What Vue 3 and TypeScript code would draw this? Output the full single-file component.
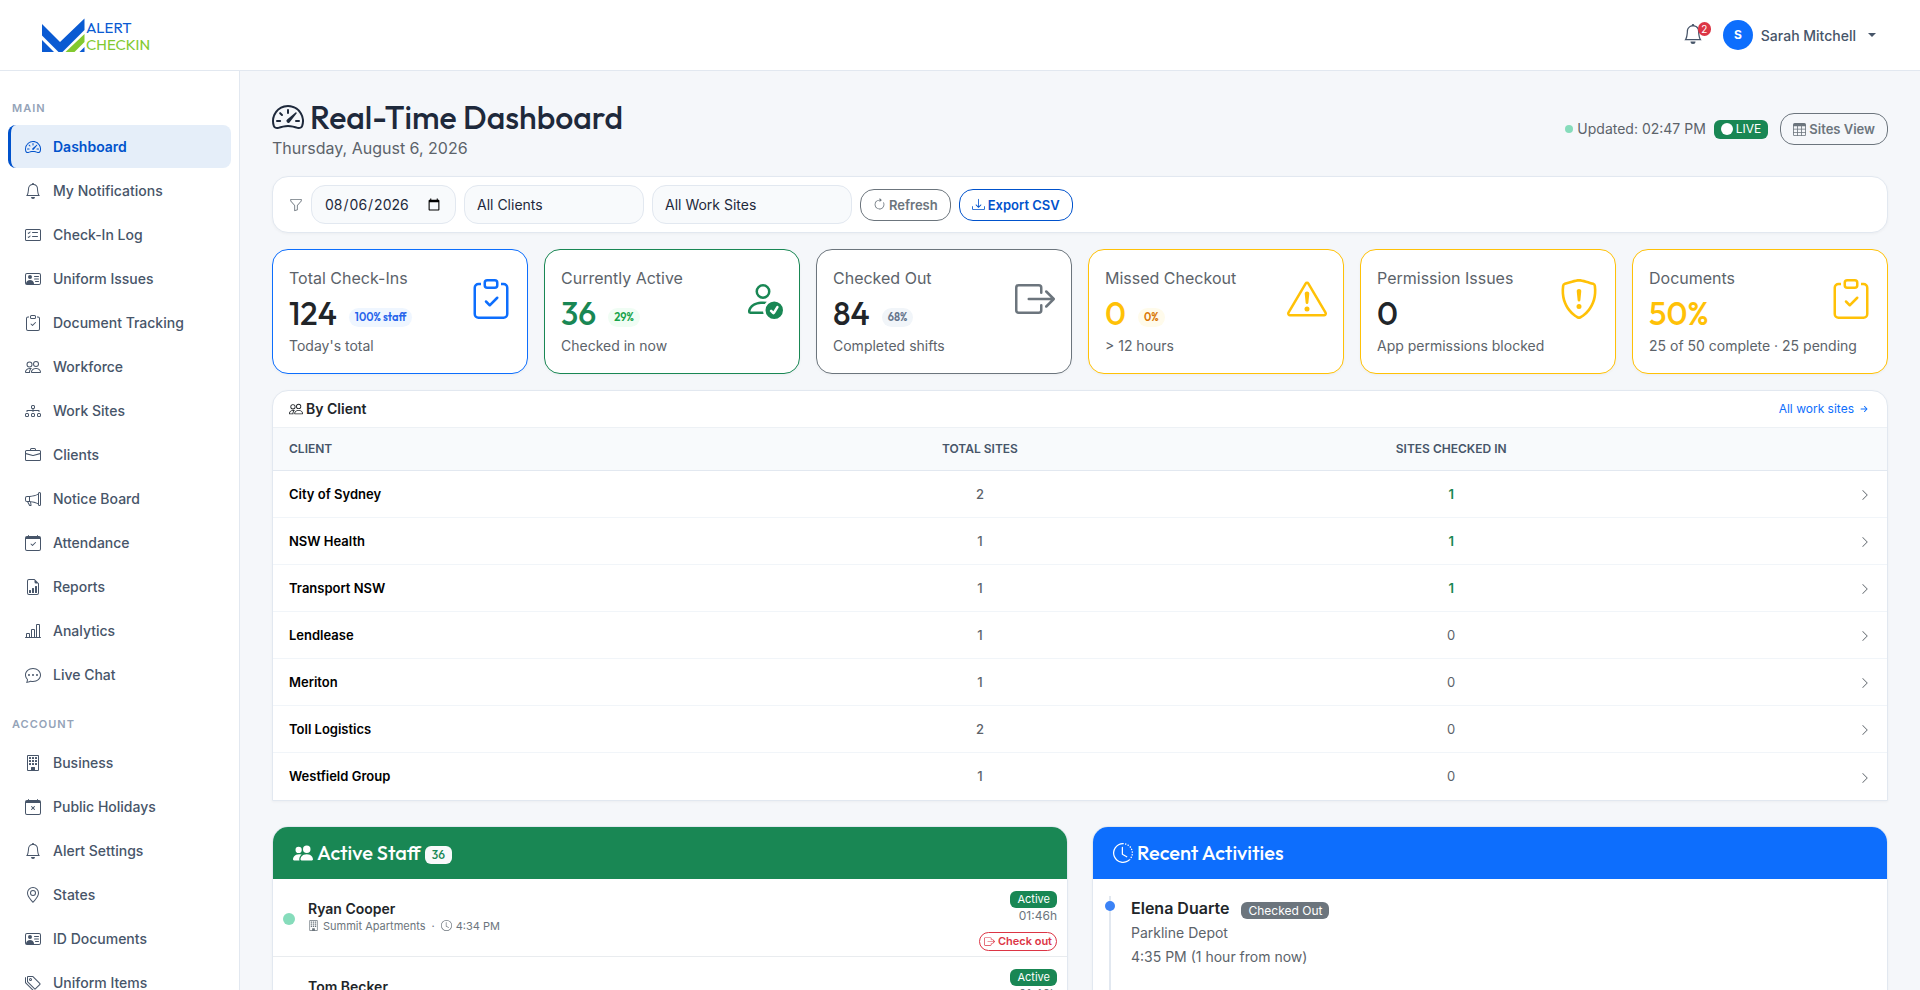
<script setup lang="ts">
import { h, ref } from 'vue'

interface NavItem { icon: string; label: string }
interface Stat {
  label: string
  value: string
  note: string
  icon: string
  tone: string
  valueTone: string
  pill?: string
  pillTone?: string
}
interface ClientRow { name: string; total: number; checkedIn: number }
interface StaffRow { name: string; site: string; time: string; elapsed: string }

const clipFrame = 'M4 1.5H3a2 2 0 0 0-2 2V14a2 2 0 0 0 2 2h10a2 2 0 0 0 2-2V3.5a2 2 0 0 0-2-2h-1v1h1a1 1 0 0 1 1 1V14a1 1 0 0 1-1 1H3a1 1 0 0 1-1-1V3.5a1 1 0 0 1 1-1h1z'
const clipTop = 'M9.5 1a.5.5 0 0 1 .5.5v1a.5.5 0 0 1-.5.5h-3a.5.5 0 0 1-.5-.5v-1a.5.5 0 0 1 .5-.5zm-3-1A1.5 1.5 0 0 0 5 1.5v1A1.5 1.5 0 0 0 6.5 4h3A1.5 1.5 0 0 0 11 2.5v-1A1.5 1.5 0 0 0 9.5 0z'
const tick = 'M10.854 7.146a.5.5 0 0 1 0 .708l-3 3a.5.5 0 0 1-.708 0l-1.5-1.5a.5.5 0 1 1 .708-.708L7.5 9.793l2.646-2.647a.5.5 0 0 1 .708 0'
const calFrame = 'M3.5 0a.5.5 0 0 1 .5.5V1h8V.5a.5.5 0 0 1 1 0V1h1a2 2 0 0 1 2 2v11a2 2 0 0 1-2 2H2a2 2 0 0 1-2-2V3a2 2 0 0 1 2-2h1V.5a.5.5 0 0 1 .5-.5M1 4v10a1 1 0 0 0 1 1h12a1 1 0 0 0 1-1V4z'
const pane = (x: number, y: number): string => `M${x} ${y + 0.5}a.5.5 0 0 1 .5-.5h1a.5.5 0 0 1 .5.5v1a.5.5 0 0 1-.5.5h-1a.5.5 0 0 1-.5-.5z`

const icons: Record<string, string[]> = {
  speedometer: [
    'M8 4a.5.5 0 0 1 .5.5V6a.5.5 0 0 1-1 0V4.5A.5.5 0 0 1 8 4M3.732 5.732a.5.5 0 0 1 .707 0l.915.914a.5.5 0 1 1-.708.708l-.914-.915a.5.5 0 0 1 0-.707M2 10a.5.5 0 0 1 .5-.5h1.586a.5.5 0 0 1 0 1H2.5A.5.5 0 0 1 2 10m9.5 0a.5.5 0 0 1 .5-.5h1.5a.5.5 0 0 1 0 1H12a.5.5 0 0 1-.5-.5m.754-4.246a.39.39 0 0 0-.527-.02L7.547 9.31a.91.91 0 1 0 1.302 1.258l3.434-4.297a.39.39 0 0 0-.029-.518z',
    'M0 10a8 8 0 1 1 15.547 2.661c-.442 1.253-1.845 1.602-2.932 1.25C11.309 13.488 9.475 13 8 13c-1.474 0-3.31.488-4.615.911-1.087.352-2.49.003-2.932-1.25A8 8 0 0 1 0 10m8-7a7 7 0 0 0-6.603 9.329c.203.575.923.876 1.68.63C4.397 12.533 6.358 12 8 12s3.604.532 4.923.96c.757.245 1.477-.056 1.68-.631A7 7 0 0 0 8 3',
  ],
  bell: ['M8 16a2 2 0 0 0 2-2H6a2 2 0 0 0 2 2M8 1.918l-.797.161A4 4 0 0 0 4 6c0 .628-.134 2.197-.459 3.742-.16.767-.376 1.566-.663 2.258h10.244c-.287-.692-.502-1.49-.663-2.258C12.134 8.197 12 6.628 12 6a4 4 0 0 0-3.203-3.92zM14.22 12c.223.447.481.801.78 1H1c.299-.199.557-.553.78-1C2.68 10.2 3 6.88 3 6c0-2.42 1.72-4.44 4.005-4.901a1 1 0 1 1 1.99 0A5 5 0 0 1 13 6c0 .88.32 4.2 1.22 6'],
  checklist: [
    'M14.5 3a.5.5 0 0 1 .5.5v9a.5.5 0 0 1-.5.5h-13a.5.5 0 0 1-.5-.5v-9a.5.5 0 0 1 .5-.5zm-13-1A1.5 1.5 0 0 0 0 3.5v9A1.5 1.5 0 0 0 1.5 14h13a1.5 1.5 0 0 0 1.5-1.5v-9A1.5 1.5 0 0 0 14.5 2z',
    'M7 5.5a.5.5 0 0 1 .5-.5h5a.5.5 0 0 1 0 1h-5a.5.5 0 0 1-.5-.5m-1.496-.854a.5.5 0 0 1 0 .708l-1.5 1.5a.5.5 0 0 1-.708 0l-.5-.5a.5.5 0 1 1 .708-.708l.146.147 1.146-1.147a.5.5 0 0 1 .708 0M7 9.5a.5.5 0 0 1 .5-.5h5a.5.5 0 0 1 0 1h-5a.5.5 0 0 1-.5-.5m-1.496-.854a.5.5 0 0 1 0 .708l-1.5 1.5a.5.5 0 0 1-.708 0l-.5-.5a.5.5 0 0 1 .708-.708l.146.147 1.146-1.147a.5.5 0 0 1 .708 0',
  ],
  vcard: [
    'M5 8a2 2 0 1 0 0-4 2 2 0 0 0 0 4m4-2.5a.5.5 0 0 1 .5-.5h4a.5.5 0 0 1 0 1h-4a.5.5 0 0 1-.5-.5M9 8a.5.5 0 0 1 .5-.5h4a.5.5 0 0 1 0 1h-4A.5.5 0 0 1 9 8m1 2.5a.5.5 0 0 1 .5-.5h3a.5.5 0 0 1 0 1h-3a.5.5 0 0 1-.5-.5',
    'M2 2a2 2 0 0 0-2 2v8a2 2 0 0 0 2 2h12a2 2 0 0 0 2-2V4a2 2 0 0 0-2-2zM1 4a1 1 0 0 1 1-1h12a1 1 0 0 1 1 1v8a1 1 0 0 1-1 1H8.96q.04-.245.04-.5C9 10.567 7.21 9 5 9c-2.086 0-3.8 1.398-3.984 3.181A1 1 0 0 1 1 12z',
  ],
  clipboard: [tick, clipFrame, clipTop],
  people: ['M15 14s1 0 1-1-1-4-5-4-5 3-5 4 1 1 1 1zm-7.978-1L7 12.996c.001-.264.167-1.03.76-1.72C8.312 10.629 9.282 10 11 10c1.717 0 2.687.63 3.24 1.276.593.69.758 1.457.76 1.72l-.008.002-.014.002zM11 7a2 2 0 1 0 0-4 2 2 0 0 0 0 4m3-2a3 3 0 1 1-6 0 3 3 0 0 1 6 0M6.936 9.28a6 6 0 0 0-1.23-.247A7 7 0 0 0 5 9c-4 0-5 3-5 4q0 1 1 1h4.216A2.24 2.24 0 0 1 5 13c0-1.01.377-2.042 1.09-2.904.243-.294.526-.569.846-.816M4.92 10A5.5 5.5 0 0 0 4 13H1c0-.26.164-1.03.76-1.724.545-.636 1.492-1.256 3.16-1.275ZM1.5 5.5a3 3 0 1 1 6 0 3 3 0 0 1-6 0m3-2a2 2 0 1 0 0 4 2 2 0 0 0 0-4'],
  diagram: ['M6 3.5A1.5 1.5 0 0 1 7.5 2h1A1.5 1.5 0 0 1 10 3.5v1A1.5 1.5 0 0 1 8.5 6v1H14a.5.5 0 0 1 .5.5v1a.5.5 0 0 1-1 0V8h-5v.5a.5.5 0 0 1-1 0V8h-5v.5a.5.5 0 0 1-1 0v-1A.5.5 0 0 1 2 7h5.5V6A1.5 1.5 0 0 1 6 4.5zM8.5 5a.5.5 0 0 0 .5-.5v-1a.5.5 0 0 0-.5-.5h-1a.5.5 0 0 0-.5.5v1a.5.5 0 0 0 .5.5zM0 11.5A1.5 1.5 0 0 1 1.5 10h1A1.5 1.5 0 0 1 4 11.5v1A1.5 1.5 0 0 1 2.5 14h-1A1.5 1.5 0 0 1 0 12.5zm1.5-.5a.5.5 0 0 0-.5.5v1a.5.5 0 0 0 .5.5h1a.5.5 0 0 0 .5-.5v-1a.5.5 0 0 0-.5-.5zm4.5.5A1.5 1.5 0 0 1 7.5 10h1a1.5 1.5 0 0 1 1.5 1.5v1A1.5 1.5 0 0 1 8.5 14h-1A1.5 1.5 0 0 1 6 12.5zm1.5-.5a.5.5 0 0 0-.5.5v1a.5.5 0 0 0 .5.5h1a.5.5 0 0 0 .5-.5v-1a.5.5 0 0 0-.5-.5zm4.5.5a1.5 1.5 0 0 1 1.5-1.5h1a1.5 1.5 0 0 1 1.5 1.5v1a1.5 1.5 0 0 1-1.5 1.5h-1a1.5 1.5 0 0 1-1.5-1.5zm1.5-.5a.5.5 0 0 0-.5.5v1a.5.5 0 0 0 .5.5h1a.5.5 0 0 0 .5-.5v-1a.5.5 0 0 0-.5-.5z'],
  briefcase: ['M6.5 1A1.5 1.5 0 0 0 5 2.5V3H1.5A1.5 1.5 0 0 0 0 4.5v8A1.5 1.5 0 0 0 1.5 14h13a1.5 1.5 0 0 0 1.5-1.5v-8A1.5 1.5 0 0 0 14.5 3H11v-.5A1.5 1.5 0 0 0 9.5 1zm0 1h3a.5.5 0 0 1 .5.5V3H6v-.5a.5.5 0 0 1 .5-.5m1.886 6.914L15 7.151V12.5a.5.5 0 0 1-.5.5h-13a.5.5 0 0 1-.5-.5V7.15l6.614 1.764a1.5 1.5 0 0 0 .772 0M1.5 4h13a.5.5 0 0 1 .5.5v1.616L8.129 7.948a.5.5 0 0 1-.258 0L1 6.116V4.5a.5.5 0 0 1 .5-.5'],
  megaphone: ['M13 2.5a1.5 1.5 0 0 1 3 0v11a1.5 1.5 0 0 1-3 0v-.214c-2.162-1.241-4.49-1.843-6.912-2.083l.405 2.712A1 1 0 0 1 5.51 15.1h-.548a1 1 0 0 1-.916-.599l-1.85-3.49-.202-.003A2.014 2.014 0 0 1 0 9V7a2.02 2.02 0 0 1 1.992-2.013 75 75 0 0 0 2.483-.075c3.043-.154 6.148-.849 8.525-2.199zm1 0v11a.5.5 0 0 0 1 0v-11a.5.5 0 0 0-1 0m-1 1.35c-2.344 1.205-5.209 1.842-8 2.033v4.233q.27.015.537.036c2.568.189 5.093.744 7.463 1.993zm-9 6.215v-4.13a95 95 0 0 1-1.992.052A1.02 1.02 0 0 0 1 7v2c0 .55.448 1.002 1.006 1.009A61 61 0 0 1 4 10.065m-.657.975 1.609 3.037.01.024h.548l-.002-.014-.443-2.966a68 68 0 0 0-1.722-.082z'],
  calendarCheck: [tick, calFrame],
  calendarX: [
    'M6.146 7.146a.5.5 0 0 1 .708 0L8 8.293l1.146-1.147a.5.5 0 1 1 .708.708L8.707 9l1.147 1.146a.5.5 0 0 1-.708.708L8 9.707l-1.146 1.147a.5.5 0 0 1-.708-.708L7.293 9 6.146 7.854a.5.5 0 0 1 0-.708',
    calFrame,
  ],
  fileGraph: [
    'M10 13.5a.5.5 0 0 0 .5.5h1a.5.5 0 0 0 .5-.5v-6a.5.5 0 0 0-.5-.5h-1a.5.5 0 0 0-.5.5zm-2.5.5a.5.5 0 0 1-.5-.5v-4a.5.5 0 0 1 .5-.5h1a.5.5 0 0 1 .5.5v4a.5.5 0 0 1-.5.5zm-3 0a.5.5 0 0 1-.5-.5v-2a.5.5 0 0 1 .5-.5h1a.5.5 0 0 1 .5.5v2a.5.5 0 0 1-.5.5z',
    'M14 14V4.5L9.5 0H4a2 2 0 0 0-2 2v12a2 2 0 0 0 2 2h8a2 2 0 0 0 2-2M9.5 3A1.5 1.5 0 0 0 11 4.5h2V14a1 1 0 0 1-1 1H4a1 1 0 0 1-1-1V2a1 1 0 0 1 1-1h5.5z',
  ],
  barChart: ['M11 2a1 1 0 0 1 1-1h2a1 1 0 0 1 1 1v12h.5a.5.5 0 0 1 0 1H.5a.5.5 0 0 1 0-1H1v-3a1 1 0 0 1 1-1h2a1 1 0 0 1 1 1v3h1V7a1 1 0 0 1 1-1h2a1 1 0 0 1 1 1v7h1zm1 12h2V2h-2zm-3 0V7H7v7zm-5 0v-3H2v3z'],
  chat: [
    'M5 8a1 1 0 1 1-2 0 1 1 0 0 1 2 0m4 0a1 1 0 1 1-2 0 1 1 0 0 1 2 0m3 1a1 1 0 1 0 0-2 1 1 0 0 0 0 2',
    'm2.165 15.803.02-.004c1.83-.363 2.948-.842 3.468-1.105A9 9 0 0 0 8 15c4.418 0 8-3.134 8-7s-3.582-7-8-7-8 3.134-8 7c0 1.76.743 3.37 1.97 4.6a10.4 10.4 0 0 1-.524 2.318l-.003.011a11 11 0 0 1-.244.637c-.079.186.074.394.273.362a22 22 0 0 0 .693-.125m.8-3.108a1 1 0 0 0-.287-.801C1.618 10.83 1 9.468 1 8c0-3.192 3.004-6 7-6s7 2.808 7 6-3.004 6-7 6a8 8 0 0 1-2.088-.272 1 1 0 0 0-.711.074c-.387.196-1.24.57-2.634.893a11 11 0 0 0 .398-2',
  ],
  building: [
    [4, 7, 10].flatMap((x) => [2, 5, 8].map((y) => pane(x, y))).join(''),
    'M2 1a1 1 0 0 1 1-1h10a1 1 0 0 1 1 1v14a1 1 0 0 1-1 1H3a1 1 0 0 1-1-1zm11 0H3v14h3v-2.5a.5.5 0 0 1 .5-.5h3a.5.5 0 0 1 .5.5V15h3z',
  ],
  pin: [
    'M12.166 8.94c-.524 1.062-1.234 2.12-1.96 3.07A32 32 0 0 1 8 14.58a32 32 0 0 1-2.206-2.57c-.726-.95-1.436-2.008-1.96-3.07C3.304 7.867 3 6.862 3 6a5 5 0 0 1 10 0c0 .862-.305 1.867-.834 2.94M8 16s6-5.686 6-10A6 6 0 0 0 2 6c0 4.314 6 10 6 10',
    'M8 8a2 2 0 1 1 0-4 2 2 0 0 1 0 4m0 1a3 3 0 1 0 0-6 3 3 0 0 0 0 6',
  ],
  tags: [
    'M3 2v4.586l7 7L14.586 9l-7-7zM2 2a1 1 0 0 1 1-1h4.586a1 1 0 0 1 .707.293l7 7a1 1 0 0 1 0 1.414l-4.586 4.586a1 1 0 0 1-1.414 0l-7-7A1 1 0 0 1 2 6.586z',
    'M5.5 5a.5.5 0 1 1 0-1 .5.5 0 0 1 0 1m0 1a1.5 1.5 0 1 0 0-3 1.5 1.5 0 0 0 0 3M1 7.086a1 1 0 0 0 .293.707L8.75 15.25l-.043.043a1 1 0 0 1-1.414 0l-7-7A1 1 0 0 1 0 7.586V3a1 1 0 0 1 1-1z',
  ],
  funnel: ['M1.5 1.5A.5.5 0 0 1 2 1h12a.5.5 0 0 1 .5.5v2a.5.5 0 0 1-.128.334L10 8.692V13.5a.5.5 0 0 1-.342.474l-3 1A.5.5 0 0 1 6 14.5V8.692L1.628 3.834A.5.5 0 0 1 1.5 3.5zm1 .5v1.308l4.372 4.858A.5.5 0 0 1 7 8.5v5.306l2-.666V8.5a.5.5 0 0 1 .128-.334L13.5 3.308V2z'],
  refresh: [
    'M8 3a5 5 0 1 0 4.546 2.914.5.5 0 0 1 .908-.417A6 6 0 1 1 8 2z',
    'M8 4.466V.534a.25.25 0 0 1 .41-.192l2.36 1.966c.12.1.12.284 0 .384L8.41 4.658A.25.25 0 0 1 8 4.466',
  ],
  download: [
    'M.5 9.9a.5.5 0 0 1 .5.5v2.5a1 1 0 0 0 1 1h12a1 1 0 0 0 1-1v-2.5a.5.5 0 0 1 1 0v2.5a2 2 0 0 1-2 2H2a2 2 0 0 1-2-2v-2.5a.5.5 0 0 1 .5-.5',
    'M7.646 11.854a.5.5 0 0 0 .708 0l3-3a.5.5 0 0 0-.708-.708L8.5 10.293V1.5a.5.5 0 0 0-1 0v8.793L5.354 8.146a.5.5 0 1 0-.708.708z',
  ],
  personCheck: [
    'M12.5 16a3.5 3.5 0 1 0 0-7 3.5 3.5 0 0 0 0 7m1.679-4.493-1.335 2.226a.75.75 0 0 1-1.174.144l-.774-.773a.5.5 0 0 1 .708-.708l.547.548 1.17-1.951a.5.5 0 1 1 .858.514M11 5a3 3 0 1 1-6 0 3 3 0 0 1 6 0M8 7a2 2 0 1 0 0-4 2 2 0 0 0 0 4',
    'M8.256 14a4.5 4.5 0 0 1-.229-1.004H3c.001-.246.154-.986.832-1.664C4.484 10.68 5.711 10 8 10q.39 0 .74.025c.226-.341.496-.65.804-.918Q8.844 9.002 8 9c-5 0-6 3-6 4s1 1 1 1z',
  ],
  exit: [
    'M10 12.5a.5.5 0 0 1-.5.5h-8a.5.5 0 0 1-.5-.5v-9a.5.5 0 0 1 .5-.5h8a.5.5 0 0 1 .5.5v2a.5.5 0 0 0 1 0v-2A1.5 1.5 0 0 0 9.5 2h-8A1.5 1.5 0 0 0 0 3.5v9A1.5 1.5 0 0 0 1.5 14h8a1.5 1.5 0 0 0 1.5-1.5v-2a.5.5 0 0 0-1 0z',
    'M15.854 8.354a.5.5 0 0 0 0-.708l-3-3a.5.5 0 0 0-.708.708L14.293 7.5H5.5a.5.5 0 0 0 0 1h8.793l-2.147 2.146a.5.5 0 0 0 .708.708z',
  ],
  warning: [
    'M7.938 2.016A.13.13 0 0 1 8.002 2a.13.13 0 0 1 .063.016.15.15 0 0 1 .054.057l6.857 11.667c.036.06.035.124.002.183a.2.2 0 0 1-.054.06.1.1 0 0 1-.066.017H1.146a.1.1 0 0 1-.066-.017.2.2 0 0 1-.054-.06.18.18 0 0 1 .002-.183L7.884 2.073a.15.15 0 0 1 .054-.057m1.044-.45a1.13 1.13 0 0 0-1.96 0L.165 13.233c-.457.778.091 1.767.98 1.767h13.713c.889 0 1.438-.99.98-1.767z',
    'M7.002 12a1 1 0 1 1 2 0 1 1 0 0 1-2 0M7.1 5.995a.905.905 0 1 1 1.8 0l-.35 3.507a.552.552 0 0 1-1.1 0z',
  ],
  shield: [
    'M5.338 1.59a61 61 0 0 0-2.837.856.48.48 0 0 0-.328.39c-.554 4.157.726 7.19 2.253 9.188a10.7 10.7 0 0 0 2.287 2.233c.346.244.652.42.893.533q.18.085.293.118a1 1 0 0 0 .101.025 1 1 0 0 0 .1-.025q.114-.034.294-.118c.24-.113.547-.29.893-.533a10.7 10.7 0 0 0 2.287-2.233c1.527-1.997 2.807-5.031 2.253-9.188a.48.48 0 0 0-.328-.39c-.651-.213-1.75-.56-2.837-.855C9.552 1.29 8.531 1.067 8 1.067c-.53 0-1.552.223-2.662.524zM5.072.56C6.157.265 7.31 0 8 0s1.843.265 2.928.56c1.11.3 2.229.655 2.887.87a1.54 1.54 0 0 1 1.044 1.262c.596 4.477-.787 7.795-2.465 9.99a11.8 11.8 0 0 1-2.517 2.453 7 7 0 0 1-1.048.625c-.28.132-.581.24-.829.24s-.548-.108-.829-.24a7 7 0 0 1-1.048-.625 11.8 11.8 0 0 1-2.517-2.453C1.928 10.487.545 7.169 1.141 2.692A1.54 1.54 0 0 1 2.185 1.43 63 63 0 0 1 5.072.56',
    'M7.001 11a1 1 0 1 1 2 0 1 1 0 0 1-2 0M7.1 4.995a.905.905 0 1 1 1.8 0l-.35 3.507a.553.553 0 0 1-1.1 0z',
  ],
  chevron: ['M4.646 1.646a.5.5 0 0 1 .708 0l6 6a.5.5 0 0 1 0 .708l-6 6a.5.5 0 0 1-.708-.708L10.293 8 4.646 2.354a.5.5 0 0 1 0-.708'],
  arrowShort: ['M4 8a.5.5 0 0 1 .5-.5h5.793L8.146 5.354a.5.5 0 1 1 .708-.708l3 3a.5.5 0 0 1 0 .708l-3 3a.5.5 0 0 1-.708-.708L10.293 8.5H4.5A.5.5 0 0 1 4 8'],
  peopleFill: ['M7 14s-1 0-1-1 1-4 5-4 5 3 5 4-1 1-1 1zm4-6a3 3 0 1 0 0-6 3 3 0 0 0 0 6m-5.784 6A2.24 2.24 0 0 1 5 13c0-1.355.68-2.75 1.936-3.72A6.3 6.3 0 0 0 5 9c-4 0-5 3-5 4s1 1 1 1zM4.5 8a2.5 2.5 0 1 0 0-5 2.5 2.5 0 0 0 0 5'],
  history: [
    'M8.515 1.019A7 7 0 0 0 8 1V0a8 8 0 0 1 .589.022zm2.004.45a7 7 0 0 0-.985-.299l.219-.976q.576.129 1.126.342zm1.37.71a7 7 0 0 0-.439-.27l.493-.87a8 8 0 0 1 .979.654l-.615.789a7 7 0 0 0-.418-.302zm1.834 1.79a7 7 0 0 0-.653-.796l.724-.69q.406.429.747.91zm.744 1.352a7 7 0 0 0-.214-.468l.893-.45a8 8 0 0 1 .45 1.088l-.95.313a7 7 0 0 0-.179-.483m.53 2.507a7 7 0 0 0-.1-1.025l.985-.17q.1.58.116 1.17zm-.131 1.538q.05-.254.081-.51l.993.123a8 8 0 0 1-.23 1.155l-.964-.267q.069-.247.12-.501m-.952 2.379q.276-.436.486-.908l.914.405q-.24.54-.555 1.038zm-.964 1.205q.183-.183.35-.378l.758.653a8 8 0 0 1-.401.432z',
    'M8 1a7 7 0 1 0 4.95 11.95l.707.707A8.001 8.001 0 1 1 8 0z',
    'M7.5 3a.5.5 0 0 1 .5.5v5.21l3.248 1.856a.5.5 0 0 1-.496.868l-3.5-2A.5.5 0 0 1 7 9V3.5a.5.5 0 0 1 .5-.5',
  ],
  clock: [
    'M8 3.5a.5.5 0 0 0-1 0V9a.5.5 0 0 0 .252.434l3.5 2a.5.5 0 0 0 .496-.868L8 8.71z',
    'M8 16A8 8 0 1 0 8 0a8 8 0 0 0 0 16m7-8A7 7 0 1 1 1 8a7 7 0 0 1 14 0',
  ],
  table: ['M0 2a2 2 0 0 1 2-2h12a2 2 0 0 1 2 2v12a2 2 0 0 1-2 2H2a2 2 0 0 1-2-2zm15 2h-4v3h4zm0 4h-4v3h4zm0 4h-4v3h3a1 1 0 0 0 1-1zm-5 3v-3H6v3zm-5 0v-3H1v2a1 1 0 0 0 1 1zm-4-4h4V8H1zm0-4h4V4H1zm5-3v3h4V4zm4 4H6v3h4z'],
}

const Icon = (props: { name: string }) =>
  h(
    'svg',
    { viewBox: '0 0 16 16', fill: 'currentColor', 'aria-hidden': 'true' },
    icons[props.name].map((d) => h('path', { d, 'fill-rule': 'evenodd' })),
  )
Icon.props = ['name']

const groups: { title: string; items: NavItem[] }[] = [
  {
    title: 'Main',
    items: [
      { icon: 'speedometer', label: 'Dashboard' },
      { icon: 'bell', label: 'My Notifications' },
      { icon: 'checklist', label: 'Check-In Log' },
      { icon: 'vcard', label: 'Uniform Issues' },
      { icon: 'clipboard', label: 'Document Tracking' },
      { icon: 'people', label: 'Workforce' },
      { icon: 'diagram', label: 'Work Sites' },
      { icon: 'briefcase', label: 'Clients' },
      { icon: 'megaphone', label: 'Notice Board' },
      { icon: 'calendarCheck', label: 'Attendance' },
      { icon: 'fileGraph', label: 'Reports' },
      { icon: 'barChart', label: 'Analytics' },
      { icon: 'chat', label: 'Live Chat' },
    ],
  },
  {
    title: 'Account',
    items: [
      { icon: 'building', label: 'Business' },
      { icon: 'calendarX', label: 'Public Holidays' },
      { icon: 'bell', label: 'Alert Settings' },
      { icon: 'pin', label: 'States' },
      { icon: 'vcard', label: 'ID Documents' },
      { icon: 'tags', label: 'Uniform Items' },
    ],
  },
]

const stats: Stat[] = [
  { label: 'Total Check-Ins', value: '124', note: "Today's total", icon: 'clipboard', tone: 'blue', valueTone: 'ink', pill: '100% staff', pillTone: 'pill-blue' },
  { label: 'Currently Active', value: '36', note: 'Checked in now', icon: 'personCheck', tone: 'green', valueTone: 'green', pill: '29%', pillTone: 'pill-green' },
  { label: 'Checked Out', value: '84', note: 'Completed shifts', icon: 'exit', tone: 'grey', valueTone: 'ink', pill: '68%', pillTone: 'pill-grey' },
  { label: 'Missed Checkout', value: '0', note: '> 12 hours', icon: 'warning', tone: 'amber', valueTone: 'amber', pill: '0%', pillTone: 'pill-amber' },
  { label: 'Permission Issues', value: '0', note: 'App permissions blocked', icon: 'shield', tone: 'amber', valueTone: 'ink' },
  { label: 'Documents', value: '50%', note: '25 of 50 complete · 25 pending', icon: 'clipboard', tone: 'amber', valueTone: 'amber' },
]

const clients: ClientRow[] = [
  { name: 'City of Sydney', total: 2, checkedIn: 1 },
  { name: 'NSW Health', total: 1, checkedIn: 1 },
  { name: 'Transport NSW', total: 1, checkedIn: 1 },
  { name: 'Lendlease', total: 1, checkedIn: 0 },
  { name: 'Meriton', total: 1, checkedIn: 0 },
  { name: 'Toll Logistics', total: 2, checkedIn: 0 },
  { name: 'Westfield Group', total: 1, checkedIn: 0 },
]

const staff: StaffRow[] = [
  { name: 'Ryan Cooper', site: 'Summit Apartments', time: '4:34 PM', elapsed: '01:46h' },
  { name: 'Tom Becker', site: 'Summit Apartments', time: '4:34 PM', elapsed: '01:46h' },
]

const date = ref('2026-08-06')
const client = ref('All Clients')
const site = ref('All Work Sites')
</script>

<template>
  <div class="app">
    <header class="topbar">
      <a href="#" class="logo" aria-label="Alert Checkin">
        <svg viewBox="0 0 120 42" width="120" height="42">
          <path d="M0 10 L18 28 L42.500 4.500 V16 L20.500 38 H16.500 L0 21.500Z" fill="#0a5ad2" />
          <path d="M0 26 L12 38 H0Z" fill="#0a5ad2" />
          <path d="M42.500 20 V28 L32.500 38 H23.500Z" fill="#82c92f" />
          <path d="M42.500 33 V38 H37.500Z" fill="#0a5ad2" />
          <text x="44" y="19" class="logo-text" fill="#0a5ad2">ALERT</text>
          <text x="44" y="36" class="logo-text" fill="#82c92f">CHECKIN</text>
        </svg>
      </a>
      <div class="account">
        <button type="button" class="bell" aria-label="Notifications">
          <Icon name="bell" class="i20" />
          <span class="count">2</span>
        </button>
        <button type="button" class="user">
          <span class="avatar">S</span>
          <span>Sarah Mitchell</span>
          <span class="caret"></span>
        </button>
      </div>
    </header>

    <div class="body">
      <nav class="sidebar">
        <section v-for="g in groups" :key="g.title" class="group">
          <h2>{{ g.title }}</h2>
          <a
            v-for="item in g.items"
            :key="item.label"
            href="#"
            class="nav-item"
            :class="{ active: item.label === 'Dashboard' }"
          >
            <Icon :name="item.icon" class="i16" />
            <span>{{ item.label }}</span>
          </a>
        </section>
      </nav>

      <main class="main">
        <div class="page-head">
          <div>
            <h1><Icon name="speedometer" class="i32" />Real-Time Dashboard</h1>
            <p class="today">Thursday, August 6, 2026</p>
          </div>
          <div class="status">
            <span class="updated"><i class="dot"></i>Updated: 02:47 PM</span>
            <span class="live"><i></i>LIVE</span>
            <button type="button" class="btn grey"><Icon name="table" class="i13" />Sites View</button>
          </div>
        </div>

        <form class="filters" @submit.prevent>
          <Icon name="funnel" class="i14 muted" />
          <input v-model="date" type="date" class="field date" aria-label="Date" />
          <select v-model="client" class="field client" aria-label="Client">
            <option>All Clients</option>
          </select>
          <select v-model="site" class="field site" aria-label="Work site">
            <option>All Work Sites</option>
          </select>
          <button type="submit" class="btn grey"><Icon name="refresh" class="i13" />Refresh</button>
          <button type="button" class="btn primary"><Icon name="download" class="i13" />Export CSV</button>
        </form>

        <div class="stats">
          <article v-for="s in stats" :key="s.label" class="stat" :class="'edge-' + s.tone">
            <p class="stat-label">{{ s.label }}</p>
            <p class="stat-value">
              <strong :class="s.valueTone">{{ s.value }}</strong>
              <span v-if="s.pill" class="pill" :class="s.pillTone">{{ s.pill }}</span>
            </p>
            <p class="stat-note">{{ s.note }}</p>
            <Icon :name="s.icon" class="stat-icon" :class="s.tone" />
          </article>
        </div>

        <section class="card clients">
          <div class="clients-head">
            <h2><Icon name="people" class="i14" />By Client</h2>
            <a href="#">All work sites<Icon name="arrowShort" class="i14" /></a>
          </div>
          <table>
            <colgroup>
              <col class="c-name" />
              <col class="c-total" />
              <col class="c-in" />
              <col />
            </colgroup>
            <thead>
              <tr>
                <th scope="col" class="left">Client</th>
                <th scope="col">Total Sites</th>
                <th scope="col">Sites Checked In</th>
                <th aria-label="Open"></th>
              </tr>
            </thead>
            <tbody>
              <tr v-for="c in clients" :key="c.name">
                <td class="left name">{{ c.name }}</td>
                <td class="sum">{{ c.total }}</td>
                <td :class="{ some: c.checkedIn > 0 }">{{ c.checkedIn }}</td>
                <td class="right"><Icon name="chevron" class="i12" /></td>
              </tr>
            </tbody>
          </table>
        </section>

        <div class="panels">
          <section class="card panel">
            <h2 class="panel-head bg-green">
              <Icon name="peopleFill" class="i20" />Active Staff<span class="total">36</span>
            </h2>
            <div v-for="s in staff" :key="s.name" class="staff">
              <i class="presence"></i>
              <div class="who">
                <h3>{{ s.name }}</h3>
                <p>
                  <Icon name="building" class="i11" /><span>{{ s.site }}</span>
                  <span class="sep">·</span>
                  <Icon name="clock" class="i11" /><span>{{ s.time }}</span>
                </p>
              </div>
              <div class="shift">
                <span class="tag small bg-green">Active</span>
                <span class="elapsed">{{ s.elapsed }}</span>
                <button type="button" class="checkout"><Icon name="exit" class="i11" />Check out</button>
              </div>
            </div>
          </section>

          <section class="card panel">
            <h2 class="panel-head bg-blue"><Icon name="history" class="i20" />Recent Activities</h2>
            <ol class="timeline">
              <li>
                <div class="event">
                  <h3>Elena Duarte</h3>
                  <span class="tag bg-grey">Checked Out</span>
                </div>
                <p>Parkline Depot</p>
                <p>4:35 PM (1 hour from now)</p>
              </li>
            </ol>
          </section>
        </div>
      </main>
    </div>
  </div>
</template>

<style>
body {
  margin: 0;
  background: #f5f7fa;
}
</style>

<style scoped>
.app {
  display: flex;
  flex-direction: column;
  height: 100vh;
  overflow: hidden;
  background: #f5f7fa;
  color: #212529;
  font: 400 16px/24px Inter, "Liberation Sans", sans-serif;
}
.app * {
  box-sizing: border-box;
}
h1, h2, h3, p, ol {
  margin: 0;
  padding: 0;
}
a {
  text-decoration: none;
}
button {
  font-family: inherit;
  cursor: pointer;
}
svg {
  flex: none;
}
.i11 { width: 11px; height: 11px; }
.i12 { width: 12px; height: 12px; }
.i13 { width: 13px; height: 13px; }
.i14 { width: 14px; height: 14px; }
.i16 { width: 16px; height: 16px; }
.i20 { width: 20px; height: 20px; }
.i32 { width: 32px; height: 32px; }
.muted { color: #6c757d; }

.topbar {
  display: flex;
  flex: none;
  align-items: center;
  justify-content: space-between;
  height: 71px;
  padding: 0 44px 0 42px;
  border-bottom: 1px solid #e2e8f0;
  background: #fff;
}
.logo {
  display: flex;
}
.logo-text {
  font: 400 15px Outfit, Lato, sans-serif;
}
.account, .user {
  display: flex;
  align-items: center;
}
.account {
  gap: 12px;
}
.bell {
  position: relative;
  display: flex;
  width: 28px;
  padding: 0 0 2px;
  border: 0;
  background: none;
  color: #475569;
}
.count {
  position: absolute;
  top: -2px;
  right: 0;
  width: 13px;
  height: 14px;
  border-radius: 7px;
  background: #dc3545;
  color: #fff;
  font-size: 10px;
  line-height: 14px;
}
.user {
  gap: 8px;
  padding: 0;
  border: 0;
  background: none;
  color: #475569;
  font-size: 14px;
  font-weight: 500;
}
.avatar {
  width: 30px;
  height: 30px;
  border-radius: 50%;
  background: #0d6efd;
  color: #fff;
  font-size: 12px;
  font-weight: 700;
  line-height: 30px;
}
.caret {
  margin-left: 4px;
  border: 4px solid transparent;
  border-top-color: currentColor;
  border-bottom: 0;
}

.body {
  display: flex;
  flex: 1;
  min-height: 0;
}
.sidebar {
  flex: none;
  width: 240px;
  padding: 23px 8px 0;
  overflow-y: auto;
  scrollbar-width: none;
  border-right: 1px solid #e2e8f0;
  background: #fff;
}
.group {
  display: flex;
  flex-direction: column;
  gap: 1px;
  margin-bottom: 14px;
}
.group h2 {
  padding: 4px 4px 6px;
  color: #94a3b8;
  font-size: 11px;
  font-weight: 600;
  line-height: 20px;
  letter-spacing: 1px;
  text-transform: uppercase;
}
.nav-item {
  display: flex;
  align-items: center;
  gap: 12px;
  height: 43px;
  padding: 0 14px;
  border-left: 3px solid transparent;
  border-radius: 8px;
  color: #475569;
  font-size: 14px;
  font-weight: 500;
}
.nav-item.active {
  border-left-color: #0052cc;
  background: #e5eef9;
  color: #0052cc;
  font-weight: 600;
}

.main {
  flex: 1;
  min-width: 0;
  padding: 27px 32px;
  overflow-y: auto;
  scrollbar-width: none;
}
.page-head {
  display: flex;
  align-items: center;
  justify-content: space-between;
  margin-bottom: 16px;
}
h1 {
  display: flex;
  align-items: center;
  gap: 6px;
  color: #1e293b;
  font: 500 32px/38px Outfit, Lato, sans-serif;
}
.today {
  color: #5c636a;
}
.status {
  display: flex;
  align-items: center;
}
.updated {
  display: flex;
  align-items: center;
  gap: 4px;
  margin-right: 8px;
  color: #5c636a;
  font-size: 14px;
}
.dot {
  width: 8px;
  height: 8px;
  border-radius: 50%;
  background: #86dcbb;
}
.live {
  display: flex;
  align-items: center;
  gap: 3px;
  height: 19px;
  margin-right: 12px;
  padding: 0 7px;
  border-radius: 6px;
  background: #198754;
  color: #fff;
  font-size: 12px;
}
.live i {
  width: 12px;
  height: 12px;
  border-radius: 50%;
  background: #fff;
}
.btn {
  display: flex;
  align-items: center;
  gap: 3px;
  height: 32px;
  padding: 0 12px;
  border: 1px solid currentColor;
  border-radius: 14px;
  background: none;
  font-size: 13px;
  font-weight: 600;
}
.btn.grey { color: #6c757d; }
.btn.primary { color: #0052cc; }

.filters {
  display: flex;
  align-items: center;
  gap: 8px;
  margin-bottom: 16px;
  padding: 8px 16px;
  border: 1px solid #e2e8f0;
  border-radius: 16px;
  background: #fff;
  box-shadow: 0 1px 3px rgba(0, 0, 0, 0.04);
}
.field {
  height: 39px;
  padding: 0 12px;
  border: 1px solid #e2e8f0;
  border-radius: 14px;
  background: #f8fafc;
  color: #1e293b;
  font: 400 14px/22px Inter, "Liberation Sans", sans-serif;
  appearance: none;
}
.date { width: 145px; }
.client { width: 180px; }
.site { width: 200px; }

.stats {
  display: grid;
  grid-template-columns: repeat(6, 1fr);
  gap: 16px;
  margin-bottom: 16px;
}
.stat {
  position: relative;
  padding: 16px 16px 17px;
  border: 1px solid;
  border-radius: 16px;
  background: #fff;
  box-shadow: 0 1px 3px rgba(0, 0, 0, 0.04);
}
.stat-label, .stat-note {
  color: #5c636a;
}
.stat-note {
  font-size: 14px;
  line-height: 21px;
}
.stat-value {
  display: flex;
  align-items: center;
  gap: 12px;
  height: 45px;
}
.stat-value strong {
  font: 500 32px/38px Outfit, Lato, sans-serif;
}
.pill {
  height: 19px;
  margin-top: 9px;
  padding: 0 6px;
  border-radius: 10px;
  font: 600 11px/19px Outfit, Lato, sans-serif;
}
.stat-icon {
  position: absolute;
  top: 29px;
  right: 16px;
  width: 40px;
  height: 40px;
}
.ink { color: #212529; }
.blue { color: #0d6efd; }
.green { color: #198754; }
.grey { color: #6c757d; }
.amber { color: #ffc107; }
.edge-blue { border-color: #0d6efd; }
.edge-green { border-color: #198754; }
.edge-grey { border-color: #6c757d; }
.edge-amber { border-color: #ffc107; }
.pill-blue { background: #eff6ff; color: #2563eb; }
.pill-green { background: #f0fdf4; color: #16a34a; }
.pill-grey { background: #f1f5f9; color: #64748b; }
.pill-amber { background: #fffbeb; color: #d97706; }
.bg-green { background: #198754; }
.bg-blue { background: #0d6efd; }
.bg-grey { background: #6c757d; }

.card {
  border: 1px solid #e2e8f0;
  border-radius: 16px;
  background: #fff;
  box-shadow: 0 1px 3px rgba(0, 0, 0, 0.04);
}
.clients {
  margin-bottom: 25px;
  border-radius: 16px 16px 0 0;
}
.clients-head {
  display: flex;
  align-items: center;
  justify-content: space-between;
  height: 36px;
  padding: 0 16px;
}
.clients-head h2, .clients-head a {
  display: flex;
  align-items: center;
  gap: 3px;
  font-size: 14px;
  font-weight: 600;
}
.clients-head a {
  color: #0d6efd;
  font-size: 12px;
  font-weight: 400;
}
table {
  width: 100%;
  border-collapse: collapse;
  table-layout: fixed;
}
.c-name, .c-total, .c-in { width: 29.2%; }
th, td {
  height: 47px;
  padding: 0 16px;
  border-bottom: 1px solid #f1f5f9;
  text-align: center;
  font-size: 13px;
  color: #5c636a;
}
th {
  height: 43px;
  border-top: 1px solid #edf1f5;
  border-bottom-color: #e2e8f0;
  background: #f8fafc;
  color: #475569;
  font-size: 12px;
  font-weight: 600;
  text-transform: uppercase;
}
tbody tr:last-child td {
  border-bottom: 0;
}
.left { text-align: left; }
.right { text-align: right; }
.right svg { vertical-align: middle; }
.name {
  color: #000;
  font-weight: 600;
}
.sum {
  font-weight: 500;
}
.some {
  color: #198754;
  font-weight: 600;
}

.panels {
  display: grid;
  grid-template-columns: 1fr 1fr;
  gap: 24px;
}
.panel {
  overflow: hidden;
}
.panel-head {
  display: flex;
  align-items: center;
  gap: 4px;
  height: 52px;
  padding: 0 20px;
  color: #fff;
  font: 500 20px/24px Outfit, Lato, sans-serif;
}
.total {
  height: 18px;
  margin-top: 5px;
  padding: 0 7px;
  border-radius: 6px;
  background: #f8f9fa;
  color: #198754;
  font-size: 12px;
  line-height: 18px;
}
.staff {
  display: flex;
  padding: 12px 10px 5px;
  border-bottom: 1px solid #e9ecef;
}
.presence {
  width: 12px;
  height: 12px;
  margin: 22px 13px 0 0;
  border-radius: 50%;
  background: #86dcbb;
}
.who {
  flex: 1;
  padding-top: 8px;
}
.who h3 {
  font-size: 14px;
  font-weight: 600;
  line-height: 20px;
}
.who p {
  display: flex;
  align-items: center;
  gap: 4px;
  color: #6c757d;
  font-size: 11px;
  line-height: 14px;
}
.sep {
  margin: 0 2px;
}
.shift {
  display: flex;
  flex-direction: column;
  align-items: flex-end;
  color: #6c757d;
  font-size: 12px;
  line-height: 16px;
}
.tag {
  padding: 0 7px;
  border-radius: 6px;
  color: #fff;
  font-size: 12px;
  line-height: 17px;
}
.tag.small {
  font-size: 11px;
}
.checkout {
  display: flex;
  align-items: center;
  gap: 3px;
  height: 19px;
  margin-top: 8px;
  padding: 0 4px;
  border: 1px solid #dc3545;
  border-radius: 10px;
  background: none;
  color: #dc3545;
  font-size: 11px;
  font-weight: 600;
}
.timeline {
  margin: 17px 16px;
  border-left: 2px solid #e2e8f0;
  list-style: none;
}
.timeline li {
  position: relative;
  min-height: 120px;
  padding-left: 20px;
}
.timeline li::before {
  content: "";
  position: absolute;
  top: 5px;
  left: -6px;
  width: 10px;
  height: 10px;
  border-radius: 50%;
  background: #3b82f6;
}
.event {
  display: flex;
  align-items: flex-end;
  gap: 12px;
  margin-bottom: 1px;
}
.event .tag {
  margin-bottom: 1px;
}
.event h3 {
  font-size: 16px;
  font-weight: 600;
  line-height: 24px;
}
.timeline p {
  color: #5c636a;
  font-size: 14px;
  line-height: 24px;
}
</style>
